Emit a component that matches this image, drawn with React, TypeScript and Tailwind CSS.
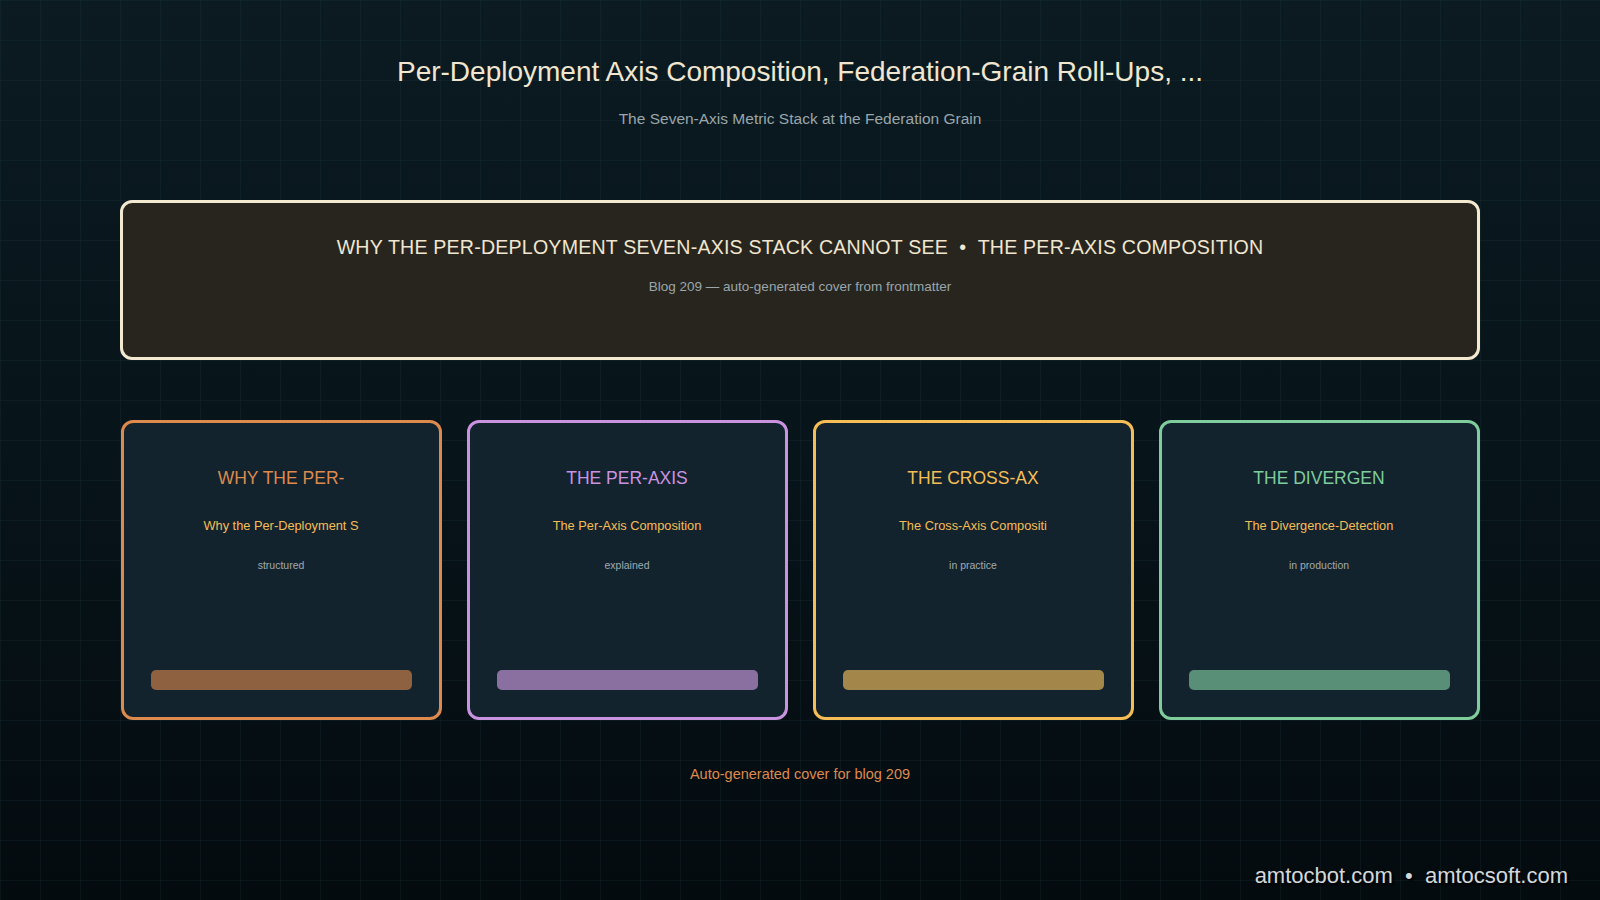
const cards = [
  { t: "WHY THE PER-", s: "Why the Per-Deployment S", n: "structured", c: "border-[#dd8a4e]", tc: "text-[#dd8a4e]", bar: "bg-[#8e6141]" },
  { t: "THE PER-AXIS", s: "The Per-Axis Composition", n: "explained", c: "border-[#c993e0]", tc: "text-[#c993e0]", bar: "bg-[#8a70a0]" },
  { t: "THE CROSS-AX", s: "The Cross-Axis Compositi", n: "in practice", c: "border-[#f5bd55]", tc: "text-[#f5bd55]", bar: "bg-[#a3864a]" },
  { t: "THE DIVERGEN", s: "The Divergence-Detection", n: "in production", c: "border-[#7fcc9d]", tc: "text-[#7fcc9d]", bar: "bg-[#5a8f77]" },
];

export default function App() {
  return (
    <div
      className="relative w-[1600px] h-[900px] overflow-hidden bg-[linear-gradient(180deg,#0b1b21_0%,#07141a_50%,#040b0f_100%)] text-center"
      style={{ fontFamily: "'Liberation Sans', Arial, sans-serif" }}
    >
      <div className="absolute inset-0 bg-[linear-gradient(rgba(40,70,80,0.18)_1px,transparent_1px),linear-gradient(90deg,rgba(40,70,80,0.18)_1px,transparent_1px)] bg-[size:40px_40px]" />
      <div className="relative flex flex-col items-center">
        <h1 className="mt-[54px] text-[28px] leading-[36px] text-[#f1e6cf]">
          Per-Deployment Axis Composition, Federation-Grain Roll-Ups, ...
        </h1>
        <p className="mt-[17px] text-[15.5px] text-[#9aa6ab]">The Seven-Axis Metric Stack at the Federation Grain</p>

        <div className="mt-[70px] w-[1360px] h-[160px] rounded-[12px] border-[3px] border-[#f3e8d0] bg-[#27251e] flex flex-col items-center">
          <div className="mt-[30px] text-[19.6px] text-[#f1e6cf] tracking-[0.2px]">
            WHY THE PER-DEPLOYMENT SEVEN-AXIS STACK CANNOT SEE&nbsp;&nbsp;•&nbsp;&nbsp;THE PER-AXIS COMPOSITION
          </div>
          <div className="mt-[14px] text-[13.5px] text-[#9aa6ab]">Blog 209 — auto-generated cover from frontmatter</div>
        </div>

        <div className="mt-[60px] flex gap-[25px]">
          {cards.map((k) => (
            <div key={k.t} className={`w-[321px] h-[300px] rounded-[12px] border-[3px] ${k.c} bg-[#13232d] flex flex-col items-center px-[27px]`}>
              <div className={`mt-[42px] text-[17.5px] ${k.tc}`}>{k.t}</div>
              <div className="mt-[24px] text-[12.8px] text-[#f5bd55]">{k.s}</div>
              <div className="mt-[23px] text-[10.5px] text-[#a0aab0]">{k.n}</div>
              <div className={`mt-auto mb-[27px] w-full h-[20px] rounded-[5px] ${k.bar}`} />
            </div>
          ))}
        </div>

        <p className="mt-[44px] text-[14.5px] text-[#dd8a4e]">Auto-generated cover for blog 209</p>
      </div>
      <div className="absolute right-[32px] bottom-[8px] text-[22px] text-[#d4d8da] [text-shadow:2px_2px_2px_#000]">
        amtocbot.com&nbsp;&nbsp;•&nbsp;&nbsp;amtocsoft.com
      </div>
    </div>
  );
}
